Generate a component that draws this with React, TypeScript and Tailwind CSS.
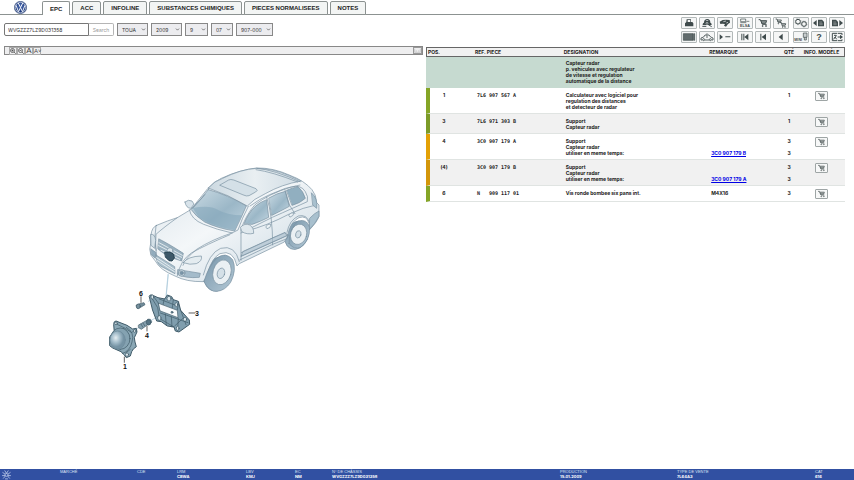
import React from 'react';
import { ChevronDown } from 'lucide-react';

const tabs = ['EPC', 'ACC', 'INFOLINE', 'SUBSTANCES CHIMIQUES', 'PIECES NORMALISEES', 'NOTES'];

const filters = [
  { label: 'Modèle', value: 'TOUA', width: 'w-[31px]' },
  { label: 'Année', value: '2009', width: 'w-[31px]' },
  { label: 'Groupe', value: '9', width: 'w-[23px]' },
  { label: 'Sous-groupe', value: '07', width: 'w-[22px]' },
  { label: 'Planche', value: '907-000', width: 'w-[37px]' }
];

const parts = [
  {
    pos: '1',
    ref: '7L6 907 567 A',
    lines: ['Calculateur avec logiciel pour', 'regulation des distances', 'et detecteur de radar'],
    link: '',
    note: '',
    qty: ['1'],
    bar: 'border-l-[#85a526]'
  },
  {
    pos: '3',
    ref: '7L6 971 303 B',
    lines: ['Support', 'Capteur radar'],
    link: '',
    note: '',
    qty: ['1'],
    bar: 'border-l-[#7c9b28]'
  },
  {
    pos: '4',
    ref: '3C0 907 179 A',
    lines: ['Support', 'Capteur radar', 'utiliser en meme temps:'],
    link: '3C0 907 179 B',
    note: '',
    qty: ['3', '', '3'],
    bar: 'border-l-[#e3a106]'
  },
  {
    pos: '(4)',
    ref: '3C0 907 179 B',
    lines: ['Support', 'Capteur radar', 'utiliser en meme temps:'],
    link: '3C0 907 179 A',
    note: '',
    qty: ['3', '', '3'],
    bar: 'border-l-[#d3960a]'
  },
  {
    pos: '6',
    ref: 'N   909 117 01',
    lines: ['Vis ronde bombee six pans int.'],
    link: '',
    note: 'M4X16',
    qty: ['3'],
    bar: 'border-l-[#85a526]'
  }
];

const vehicle = [
  { label: 'MARCHÉ', value: '' },
  { label: 'CDE', value: '' },
  { label: 'LRM', value: 'CBWA' },
  { label: 'LBV', value: 'KMJ' },
  { label: 'EC', value: 'NM' },
  { label: 'N° DE CHÂSSIS', value: 'WVGZZZ7LZ9D031358' },
  { label: 'PRODUCTION', value: '15.01.2009' },
  { label: 'TYPE DE VENTE', value: '7L64A3' },
  { label: 'CAT', value: '616' }
];

const Cart = () => (
  <g fill="none" stroke="currentColor" strokeWidth="3">
    <path d="M8 5h5l6 14h13M14 8h18l-3 8H17" />
    <path d="M15 12h15" strokeWidth="5" strokeOpacity=".7" />
    <circle cx="20" cy="24" r="1.5" />
    <circle cx="30" cy="24" r="1.5" />
  </g>
);

// Icons share a 42x30 box, two rows in each group
const toolGroups = [
  [
    [
      { name: 'Imprimer', icon: <path d="M14 4h13v8h4l3 4v9H9v-9l4-4zM17 6v6h8V6z" fill="currentColor" /> },
      {
        name: 'Véhicule',
        icon: (
          <g>
            <path d="M8 21c0-4 1-6 4-7 0-7 4-11 10-11s9 4 9 11c3 1 4 3 4 7z" fill="currentColor" />
            <path d="M17 9c2-3 7-3 9 0z" fill="#f5f6f6" />
            <circle cx="21" cy="16" r="3" fill="none" stroke="#f5f6f6" strokeWidth="1.5" />
            <path d="M7 25h12M25 20l10 6" stroke="currentColor" strokeWidth="3" />
          </g>
        )
      },
      {
        name: 'Recherche',
        icon: (
          <g fill="currentColor">
            <path d="M5 11l9-5 10-1 11 1 1 8-6 4-6 8-6-3 3-5-8-1-6 1z" />
            <path d="M16 11l8-2M25 15l5-2" stroke="#f5f6f6" strokeWidth="2" />
          </g>
        )
      }
    ],
    [
      { name: 'Planche', icon: <path d="M4 5h29v20H4zM35 5h3v20h-3z" fill="#626c6d" stroke="currentColor" strokeWidth="2" /> },
      {
        name: 'Carrosserie',
        icon: (
          <g fill="none" stroke="currentColor" strokeWidth="2.5">
            <path d="M7 24H3v-6l8-3 4-6h5M23 9h4l5 6 7 3v6h-4M15 24h12" />
            <circle cx="11" cy="23" r="3" />
            <circle cx="31" cy="23" r="3" />
            <path d="M21 18V4" />
          </g>
        )
      },
      { name: 'Réduire', icon: <path d="M5 7l10 8-10 8zM22 13h15v3H22z" fill="currentColor" /> }
    ]
  ],
  [
    [
      {
        name: 'ELSA',
        icon: (
          <g>
            <path d="M8 3h15v8H8zM7 14h18M25 10h9" fill="none" stroke="currentColor" strokeWidth="2" />
            <text x="21" y="27" textAnchor="middle" fontSize="11" fontWeight="bold" fill="currentColor">ELSA</text>
          </g>
        )
      },
      { name: 'Panier', icon: <Cart /> },
      {
        name: 'Paniers',
        icon: (
          <g fill="none" stroke="currentColor" strokeWidth="2.5">
            <path d="M5 3h4l3 10h10M10 6h12l-1 4H11M18 14h4l3 10h9M23 17h12l-1 4h-9" />
            <circle cx="26" cy="27" r="1" />
            <circle cx="33" cy="27" r="1" />
            <circle cx="13" cy="17" r="1" />
          </g>
        )
      }
    ],
    [
      { name: 'Début', icon: <path d="M10 5h3v20h-3zM16 5h3v20h-3zM31 5v20L19 15z" fill="currentColor" /> },
      { name: 'Précédent', icon: <path d="M13 5h3v20h-3zM30 5v20L17 15z" fill="currentColor" /> },
      { name: 'Retour', icon: <path d="M26 5v20L14 15z" fill="currentColor" /> }
    ]
  ],
  [
    [
      {
        name: 'Réglages',
        icon: (
          <g fill="none" stroke="currentColor">
            <circle cx="12" cy="11" r="7" strokeWidth="3" />
            <circle cx="12" cy="11" r="9" strokeWidth="2" strokeDasharray="2 3" />
            <circle cx="30" cy="18" r="7" strokeWidth="3" />
            <circle cx="30" cy="18" r="9" strokeWidth="2" strokeDasharray="2 3" />
          </g>
        )
      },
      {
        name: 'Page précédente',
        icon: (
          <g fill="currentColor">
            <path d="M14 6v18L3 15z" />
            <path d="M18 5h12l6 6v14H18z" />
            <path d="M22 12h8M22 16h10M22 20h10" stroke="#f5f6f6" strokeWidth="1" />
          </g>
        )
      },
      {
        name: 'Page suivante',
        icon: (
          <g fill="currentColor">
            <path d="M28 6v18l11-9z" />
            <path d="M6 5h12l6 6v14H6z" />
            <path d="M10 12h8M10 16h10M10 20h10" stroke="#f5f6f6" strokeWidth="1" />
          </g>
        )
      }
    ],
    [
      {
        name: 'MINI',
        icon: (
          <g>
            <text x="1" y="26" fontSize="11" fontWeight="bold" fill="currentColor">MINI</text>
            <path d="M28 3h11v13H28zM31 16v8h6v-8" fill="#c9cecf" stroke="currentColor" strokeWidth="2" />
          </g>
        )
      },
      {
        name: 'Aide',
        icon: <text x="21" y="25" textAnchor="middle" fontSize="27" fontWeight="bold" fill="currentColor">?</text>
      },
      {
        name: 'Quitter',
        icon: (
          <g fill="none" stroke="currentColor" strokeWidth="3">
            <path d="M22 4H7v22h15M24 4h12v5M24 26h12v-4" />
            <path d="M11 22l4-7 5 7M12 10h7l-3 6M23 15h8" />
            <path d="M30 8l9 7-9 7z" fill="currentColor" stroke="none" />
          </g>
        )
      }
    ]
  ]
];

const Logo = () => (
  <svg viewBox="0 0 40 40" className="size-[13px]" aria-label="VW">
    <defs>
      <radialGradient id="badge" cx="50%" cy="40%">
        <stop offset="0" stopColor="#5573b8" />
        <stop offset="1" stopColor="#173476" />
      </radialGradient>
    </defs>
    <circle cx="20" cy="20" r="19" fill="url(#badge)" stroke="#5a6c92" strokeWidth="2" />
    <circle cx="20" cy="20" r="16" fill="none" stroke="#e6ebf4" strokeWidth="2" />
    <path d="M13 6l7 14 7-14M6 13l8 20 6-13 6 13 8-20" fill="none" stroke="#f1f4fa" strokeWidth="3" />
  </svg>
);

const Illustration = () => (
  <svg viewBox="94 150 240 230" className="w-[240px] max-w-full" fontFamily="'Liberation Sans', sans-serif">
    <defs>
      <linearGradient id="glass" x1="0" y1="0" x2="1" y2="1">
        <stop offset="0" stopColor="#cbdbe4" />
        <stop offset="0.55" stopColor="#9bb7c7" />
        <stop offset="1" stopColor="#c3d6e1" />
      </linearGradient>
      <linearGradient id="body" x1="0" y1="0" x2="1" y2="1">
        <stop offset="0" stopColor="#d9e3e9" />
        <stop offset="0.45" stopColor="#f4f7f9" />
        <stop offset="1" stopColor="#c5d5df" />
      </linearGradient>
      <linearGradient id="roof" x1="0" y1="0" x2="1" y2="0">
        <stop offset="0" stopColor="#ccd9e1" />
        <stop offset="0.5" stopColor="#e9eff2" />
        <stop offset="1" stopColor="#d0dce4" />
      </linearGradient>
      <linearGradient id="tyre" x1="0" y1="0" x2="1" y2="1">
        <stop offset="0" stopColor="#7795a9" />
        <stop offset="1" stopColor="#b4c9d6" />
      </linearGradient>
      <radialGradient id="dome" cx="38%" cy="38%">
        <stop offset="0" stopColor="#e6eef2" />
        <stop offset="0.5" stopColor="#a9c1ce" />
        <stop offset="1" stopColor="#7593a4" />
      </radialGradient>
    </defs>

    {/* Vehicle */}
    <g transform="translate(140 155) scale(.3333)" stroke="#7790a0" strokeWidth="2" strokeLinejoin="round" strokeLinecap="round">
      <ellipse cx="235" cy="357" rx="41" ry="53" fill="url(#tyre)" transform="rotate(22 235 357)" />
      <ellipse cx="470" cy="241" rx="34" ry="44" fill="url(#tyre)" transform="rotate(24 470 241)" />
      <path
        d="M50 211Q85 196 112 188L152 164 203 101Q222 79 244 70Q300 44 350 39Q400 38 450 61Q493 77 516 104Q529 119 530 143L537 150V184Q532 200 509 224L507 205Q500 180 477 188Q456 198 447 226Q443 249 433 261L298 326 291 333Q280 282 240 296Q217 308 204 350Q199 370 190 380Q139 381 105 363Q60 345 46 318L33 301Q26 283 32 265L33 240Q35 217 50 211Z"
        fill="url(#body)"
      />
      <path d="M205 99Q224 77 248 70Q302 43 350 40Q397 40 446 61L484 78Q425 88 376 116Q340 132 322 153Q265 119 205 99Z" fill="url(#roof)" />
      <path d="M350 40Q405 45 480 80M348 44Q398 51 473 81M330 153Q360 131 389 119Q436 96 480 90" fill="none" />
      <path d="M240 90L266 75Q272 72 281 75L348 101Q356 106 347 111L327 122Q320 125 310 120Z" fill="#d4e0e7" />
      <path d="M205 104Q263 119 319 153Q304 188 284 228Q230 219 194 201Q167 184 153 163Q183 133 205 104Z" fill="url(#glass)" />
      <path d="M158 159Q209 149 233 164Q261 180 305 181L284 226Q220 215 176 187Z" fill="#84a5b9" fillOpacity=".55" stroke="none" />
      <path d="M195 119L158 160M325 154Q306 190 294 225L276 234M148 164Q153 193 191 208Q230 224 276 234" fill="none" />
      <path d="M276 234Q215 254 170 283Q137 309 129 331M270 239Q199 269 154 294Q121 316 112 362M112 188Q70 218 48 238Q43 278 52 316M48 212Q40 250 49 286" fill="none" />
      <path d="M135 141Q145 132 156 138L162 147 153 160Q138 160 135 141Z" fill="#d8e3ea" />
      {/* Side glass */}
      <path d="M313 205Q325 174 346 154Q361 141 380 134L386 187Q363 199 337 208Z" fill="url(#glass)" />
      <path d="M387 129Q410 115 436 109L448 154Q420 169 396 181Z" fill="url(#glass)" />
      <path d="M440 106Q458 98 474 95Q490 108 496 130Q480 145 457 151Z" fill="#91afc0" />
      <path d="M302 226Q318 179 345 149Q388 116 451 97Q483 87 496 110Q506 125 502 140Q462 158 397 187L303 234M380 126Q398 180 398 270M435 105L449 151 465 176M303 229V316" fill="none" />
      <path d="M318 228Q380 213 448 177Q490 157 528 150M304 293L398 249 435 234L445 240 441 251 398 268 299 315M304 303L442 241" fill="none" />
      <path d="M310 289L435 232L441 242L304 304Z" fill="#aabfcd" fillOpacity=".65" />
      <path d="M302 216Q315 203 329 210Q342 218 341 235Q320 240 306 230Z" fill="#dfe8ed" />
      <path d="M378 215q4-10 15-6q-1 11-11 12zM447 180q5-9 15-6q-1 9-11 12z" fill="#edf3f6" />
      <path d="M515 114Q534 130 530 160L519 151ZM508 218L509 190Q524 174 537 168V184Q527 205 508 224Z" fill="#a8c0ce" />
      <path d="M190 360Q207 294 242 280Q285 268 298 320M441 232Q448 196 475 183Q500 177 508 201" fill="none" />
      {/* Wheels */}
      <path d="M192 380Q205 333 231 309Q257 289 278 314Q291 344 272 382Q255 407 231 409Q208 412 192 380Z" fill="url(#tyre)" />
      <ellipse cx="246" cy="352" rx="27" ry="38" fill="#eaf0f3" transform="rotate(16 246 352)" />
      <ellipse cx="243" cy="355" rx="11" ry="16" fill="#d4e0e7" transform="rotate(16 243 355)" />
      <path d="M447 265Q447 219 475 198Q501 190 509 218Q510 255 483 276Q462 287 447 265Z" fill="url(#tyre)" />
      <ellipse cx="476" cy="238" rx="24" ry="31" fill="#eaf0f3" transform="rotate(16 476 238)" />
      <ellipse cx="475" cy="238" rx="8" ry="11" fill="#d4e0e7" transform="rotate(16 475 238)" />
      {/* Front end */}
      <path d="M57 252Q87 267 130 295L125 318Q80 306 54 282Z" fill="#9bb2c0" />
      <path d="M57 263L127 301M56 272L125 307M63 286L119 313" stroke="#e1e9ed" strokeWidth="3" />
      <path d="M48 300L104 335 105 356 61 333Q49 323 48 300Z" fill="#aabfcb" />
      <path d="M50 308L104 344M52 317L104 351" stroke="#e4ebef" strokeWidth="3" />
      <path d="M130 323Q143 304 184 303Q188 318 169 326Q150 331 130 323Z" fill="#e4ecf0" />
      <path d="M33 238Q45 236 47 256L44 280 34 272Z" fill="#d4e0e7" />
      <path d="M33 282L47 292 46 310 34 299Z" fill="#92acbd" />
      <path d="M114 344Q146 349 181 355L178 367Q137 371 113 358Z" fill="#a4bbca" />
      <circle cx="125" cy="354" r="10" fill="#c2d1da" />
      <circle cx="125" cy="354" r="5" fill="#7995a8" />
      <circle cx="90" cy="287" r="9" fill="#dae5eb" />
      <path d="M75 292L90 291 101 298 103 309 96 318 87 317 77 307Z" fill="#3d5868" stroke="#233e4c" strokeWidth="3" />
      <path d="M84 358L78 424" stroke="#a8c7da" strokeWidth="2" />
    </g>

    {/* Radar sensor, bracket and screws */}
    <g transform="translate(100 260) scale(.3333)" stroke="#3e5967" strokeWidth="2" strokeLinejoin="round" strokeLinecap="round">
      <path d="M205 44L199 104M145 124L158 117M154 181L171 171M105 211L117 203" stroke="#a8c7da" />
      <path
        d="M148 108Q150 103 156 105L174 113 194 117 202 105 215 110 220 119 235 124 242 151 268 180 269 193 237 216 226 213 222 201 202 198 184 185 170 183 158 151Z"
        fill="#809eae"
        strokeWidth="3"
      />
      <path d="M153 110L173 143 179 179M161 110L177 132M178 117L232 138M193 116L189 134M220 119L217 143M236 126L232 150M181 159L264 188M196 162L199 196M214 170L216 201M235 175L233 211M171 171L222 201M242 151L258 194M249 175L224 198" fill="none" />
      <path d="M176 130L232 151 234 173 181 153Z" fill="#fbfcfd" />
      <g fill="#dae7ed">
        <ellipse cx="157" cy="111" rx="4" ry="6" />
        <ellipse cx="207" cy="116" rx="6" ry="7" />
        <ellipse cx="229" cy="134" rx="4" ry="6" />
        <ellipse cx="178" cy="174" rx="5" ry="7" />
        <ellipse cx="255" cy="178" rx="5" ry="6" />
        <ellipse cx="233" cy="205" rx="4" ry="6" />
        <circle cx="216" cy="157" r="3" fill="#6d8c9d" />
      </g>
      <path d="M109 136L119 131 132 128 135 134 122 142 113 145Z" fill="#718c9a" />
      <ellipse cx="115" cy="139" rx="6" ry="7" fill="#78919e" />
      <path d="M116 195L139 182Q142 175 151 178L155 185 150 193 142 195 124 208 116 203Z" fill="#86a0ae" />
      <ellipse cx="146" cy="187" rx="7" ry="8" fill="#577484" />
      <path d="M123 192L128 201M129 189L134 197" />
      <path
        d="M41 193Q41 183 48 183L81 196 98 207 109 205 111 216 103 233 105 246 109 260 100 267 95 275 91 288 79 293 73 285 63 275 38 264 29 257 29 231 42 213Z"
        fill="#8ba8b6"
        strokeWidth="3"
      />
      <path d="M45 190L76 205 95 218 105 209M79 202Q105 217 96 246Q91 272 67 281M70 205Q94 219 86 248M91 268L77 279M32 249L62 268" fill="none" />
      <ellipse cx="61" cy="236" rx="29" ry="32" fill="#84a2b1" />
      <ellipse cx="53" cy="240" rx="23" ry="27" fill="url(#dome)" stroke="#6d8a9a" />
      <g fill="#d9e5eb">
        <circle cx="48" cy="190" r="4" />
        <circle cx="104" cy="213" r="4" />
        <circle cx="81" cy="284" r="5" />
      </g>
      <path d="M123 110V127M267 159H284M141 199V213M73 291V307" stroke="#111" />
    </g>
    <g fontSize="7" fontWeight="bold" fill="#111" textAnchor="middle">
      <text x="141" y="296">6</text>
      <text x="197" y="316">3</text>
      <text x="147" y="338">4</text>
      <text x="125" y="369">1</text>
    </g>
  </svg>
);

const Header = () => (
  <header>
    <nav className="flex h-[15px] items-end border-b border-[#8c9291] font-['Liberation_Sans',sans-serif] text-[6px] leading-[8px] font-bold">
      <a href="#" className="ml-[14px] mr-[15px]">
        <Logo />
      </a>
      <div className="-mb-px flex gap-[2px]">
        {tabs.map((tab, index) => (
          <button
            key={tab}
            className={
              index === 0
                ? 'h-[14px] rounded-t-[2px] border border-b-0 border-[#8c9291] bg-white px-[7px]'
                : 'h-[14px] rounded-t-[2px] border border-[#8c9291] bg-[#f3f5f4] px-[7px]'
            }
          >
            {tab}
          </button>
        ))}
      </div>
    </nav>

    <div className="flex h-[31px] items-start justify-between pl-1 pr-[9px]">
      <form className="flex gap-[3px] pt-2 text-[#333]" onSubmit={(e) => e.preventDefault()}>
        <div className="flex h-[13px]">
          <input
            aria-label="N° de châssis"
            defaultValue="WVGZZZ7LZ9D031358"
            className="w-[85px] rounded-l-[2px] border border-[#777] bg-white px-[3px] outline-none"
          />
          <button className="w-[25px] rounded-r-[2px] border border-l-0 border-[#b5b5b5] text-[#999]">Search</button>
        </div>
        {filters.map((filter) => (
          <div key={filter.label} className="relative">
            <select
              aria-label={filter.label}
              className={`${filter.width} h-[13px] appearance-none border border-[#888] bg-[#ececef] pl-1`}
            >
              <option>{filter.value}</option>
            </select>
            <ChevronDown className="pointer-events-none absolute right-[2px] top-1 size-[5px]" strokeWidth={3} />
          </div>
        ))}
      </form>

      <div className="flex gap-1 pt-[2px] font-['Liberation_Sans',sans-serif]">
        {toolGroups.map((rows, g) => (
          <div key={g} className="grid grid-cols-3 gap-[2px]">
            {rows.flat().map((tool) => (
              <button
                key={tool.name}
                aria-label={tool.name}
                className="h-[12px] w-[16px] rounded-[1px] border border-[#b3b9b9] bg-[#f5f6f6] text-[#3f4b4c]"
              >
                <svg viewBox="0 0 42 30" className="h-[10px] w-[14px]">
                  {tool.icon}
                </svg>
              </button>
            ))}
          </div>
        ))}
      </div>
    </div>
  </header>
);

const PartsTable = () => (
  <table className="w-full table-fixed border-separate border-spacing-0 text-left font-bold">
    <colgroup>
      <col className="w-[11.2%]" />
      <col className="w-[21.2%]" />
      <col className="w-[34.7%]" />
      <col className="w-[17.2%]" />
      <col className="w-[4.7%]" />
      <col className="w-[11%]" />
    </colgroup>
    <thead>
      <tr className="bg-[#f1f1f1] [&>th]:h-[10px] [&>th]:border-y [&>th]:border-[#666] [&>th]:whitespace-nowrap">
        <th className="border-l pl-px">POS.</th>
        <th className="pl-[2px]">REF. PIECE</th>
        <th className="pl-[2px]">DESIGNATION</th>
        <th className="pl-[2px]">REMARQUE</th>
        <th className="text-center">QTÉ</th>
        <th className="border-r text-center">INFO. MODÈLE</th>
      </tr>
    </thead>
    <tbody className="align-top">
      <tr className="bg-[#c6dad0]">
        <td colSpan={2} />
        <td colSpan={4} className="pt-[3px] pb-1 pl-1">
          <p>Capteur radar</p>
          <p>p. vehicules avec regulateur</p>
          <p>de vitesse et regulation</p>
          <p>automatique de la distance</p>
        </td>
      </tr>
      {parts.map((part) => (
        <tr key={part.ref} className="even:bg-white odd:bg-[#f1f1f1] [&>td]:border-b [&>td]:border-b-[#e0e4e2]">
          <td className={`border-l-4 pt-1 pr-[15px] text-center ${part.bar}`}>{part.pos}</td>
          <td className="pt-1 pl-1 font-['DejaVu_Sans_Mono',monospace] whitespace-pre">{part.ref}</td>
          <td className="pt-1 pb-[3px] pl-1 whitespace-nowrap">
            {part.lines.map((line) => (
              <p key={line}>{line}</p>
            ))}
          </td>
          <td className="pt-1 pl-1 whitespace-nowrap">
            {part.note}
            {part.link && (
              <a href="#" className="mt-3 block text-[#0000e6] underline">
                {part.link}
              </a>
            )}
          </td>
          <td className="pt-1 text-center">
            {part.qty.map((qty, i) => (
              <p key={i} className="h-[6px]">{qty}</p>
            ))}
          </td>
          <td className="pt-[3px] pb-[2px]">
            <button
              aria-label="Ajouter au panier"
              className="mx-auto block h-[10px] w-[13px] rounded-[1px] border border-[#9ea5a5] bg-[#f7f8f8] text-[#555f60]"
            >
              <svg viewBox="0 0 42 30" className="h-2 w-[11px]">
                <Cart />
              </svg>
            </button>
          </td>
        </tr>
      ))}
    </tbody>
  </table>
);

const App = () => {
  return (
    <div className="flex min-h-screen flex-col bg-white font-['Inter',sans-serif] text-[5px] leading-[6px] text-[#222]">
      <Header />

      <main className="flex flex-1 gap-[3px] pl-1 pr-[9px]">
        <section className="min-w-0 flex-1">
          <div className="flex h-[9px] items-center justify-between border border-[#888] bg-[#eeeeef] pl-1 font-['Liberation_Sans',sans-serif] text-[#444]">
            <div className="flex">
              {['Zoom avant', 'Zoom arrière'].map((name, i) => (
                <button key={name} aria-label={name} className="size-2 border border-[#aaa]">
                  <svg viewBox="0 0 24 24" className="size-[6px]" fill="none" stroke="currentColor" strokeWidth="3">
                    <circle cx="10" cy="10" r="8" />
                    <path d={i === 0 ? 'M16 16l7 7M6 10h8M10 6v8' : 'M16 16l7 7M6 10h8'} />
                  </svg>
                </button>
              ))}
              <button className="h-2 w-2 border border-[#aaa] text-[8px]">A</button>
              <button className="h-2 w-2 border border-[#aaa] text-[6px]">A˅</button>
            </div>
            <button aria-label="Agrandir" className="h-[7px] w-[9px] border border-[#999]">
              <svg viewBox="0 0 21 15" className="h-[5px] w-[7px]" fill="none" stroke="#888" strokeWidth="1">
                <path d="M2 2v11h17V2M5 9h4M12 9h4" />
              </svg>
            </button>
          </div>
          <div className="flex justify-center pt-[95px]">
            <Illustration />
          </div>
        </section>

        <section className="min-w-0 flex-1 pt-px">
          <PartsTable />
        </section>
      </main>

      <footer className="grid h-[11px] grid-cols-[60fr_77fr_40fr_69fr_49fr_37fr_228fr_117fr_138fr_39fr] bg-[#3150a2] text-[4px] leading-[5px] text-white">
        <svg viewBox="0 0 30 30" className="ml-px size-[11px]" fill="none" stroke="#cbd7f1" strokeWidth="2">
          <circle cx="15" cy="16" r="4" />
          <path d="M10 4l5 8 5-8M4 9l7 5M26 9l-7 5M3 18h8M19 18h8M6 26l6-7M24 26l-6-7M11 27h8" />
        </svg>
        {vehicle.map((item) => (
          <dl key={item.label} className="whitespace-nowrap">
            <dt className="font-['Liberation_Sans',sans-serif] text-[#dbe3f4]">{item.label}</dt>
            <dd className="font-bold">{item.value}</dd>
          </dl>
        ))}
      </footer>
    </div>
  );
};

export default App;
